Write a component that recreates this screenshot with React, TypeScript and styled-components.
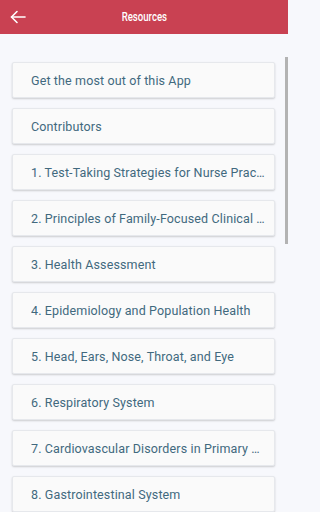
import React from "react";
import styled, { createGlobalStyle } from "styled-components";

const GlobalStyle = createGlobalStyle`
    html, body {
        margin: 0;
        padding: 0;
        background-color: #f7f8fc;
        font-family: Roboto, "Noto Sans", sans-serif;
    }
`;

const Screen = styled.div`
    position: relative;
    width: 288px;
    height: 512px;
    overflow: hidden;
    background-color: #f7f8fc;
`;

const Header = styled.header`
    display: grid;
    grid-template-columns: 34px 1fr 34px;
    align-items: center;
    height: 34px;
    background-color: #c94152;
    color: white;
`;

const BackButton = styled.button`
    display: flex;
    align-items: center;
    justify-content: center;
    height: 34px;
    padding: 0 0 0 1px;
    border: 0;
    background: none;
    color: white;
    cursor: pointer;
`;

const Title = styled.h1`
    margin: 0;
    text-align: center;
    font-family: Roboto, sans-serif;
    font-size: 12px;
    font-weight: 500;

    span {
        display: inline-block;
        transform: scaleX(0.8);
    }
`;

const List = styled.div`
    display: flex;
    flex-direction: column;
    gap: 10px;
    padding: 28px 13px 0 12px;
`;

const Card = styled.div`
    display: flex;
    align-items: center;
    height: 36px;
    padding: 0 9px 0 18px;
    background-color: #fafafa;
    border: 1px solid #e6e8ec;
    border-radius: 2px;
    box-shadow: 0 1px 2px rgba(0, 0, 0, 0.18);
    box-sizing: border-box;
    cursor: pointer;
`;

const Label = styled.span`
    font-size: 12.5px;
    letter-spacing: 0.13px;
    color: #41697e;
    white-space: nowrap;
    overflow: hidden;
    text-overflow: ellipsis;
`;

const Scrollbar = styled.div`
    position: absolute;
    right: 0;
    top: 57px;
    width: 3px;
    height: 187px;
    background-color: #b3b3b3;
`;

const items = [
    "Get the most out of this App",
    "Contributors",
    "1. Test-Taking Strategies for Nurse Practitioners",
    "2. Principles of Family-Focused Clinical Practice",
    "3. Health Assessment",
    "4. Epidemiology and Population Health",
    "5. Head, Ears, Nose, Throat, and Eye",
    "6. Respiratory System",
    "7. Cardiovascular Disorders in Primary Care",
    "8. Gastrointestinal System",
];

export default function App() {
    return (
        <Screen>
            <GlobalStyle />
            <Header>
                <BackButton aria-label="Back">
                    <svg width="16" height="14" viewBox="0 0 16 14" fill="none" stroke="currentColor" strokeWidth="1.6" strokeLinecap="round" strokeLinejoin="round">
                        <path d="M15 7H1.5" />
                        <path d="M7 1.5L1.5 7L7 12.5" />
                    </svg>
                </BackButton>
                <Title><span>Resources</span></Title>
                <span />
            </Header>
            <List>
                {items.map((item) => (
                    <Card key={item}>
                        <Label>{item}</Label>
                    </Card>
                ))}
            </List>
            <Scrollbar />
        </Screen>
    );
}
